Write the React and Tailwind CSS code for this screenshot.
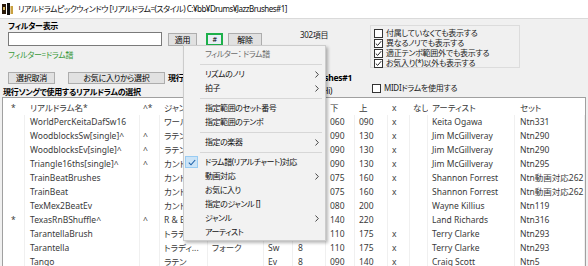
import React from "react";

const rows = [
  { s: "", name: "WorldPercKeitaDafSw16", c: "", g: "ワールド", lo: "060", hi: "090", x: "x", art: "Keita Ogawa", set: "Ntn331" },
  { s: "", name: "WoodblocksSw[single]^", c: "^", g: "ラテン", lo: "090", hi: "130", x: "x", art: "Jim McGillveray", set: "Ntn290" },
  { s: "", name: "WoodblocksEv[single]^", c: "^", g: "ラテン", lo: "090", hi: "130", x: "x", art: "Jim McGillveray", set: "Ntn290" },
  { s: "", name: "Triangle16ths[single]^", c: "^", g: "カントリー", lo: "090", hi: "130", x: "x", art: "Jim McGillveray", set: "Ntn295" },
  { s: "", name: "TrainBeatBrushes", c: "", g: "カントリー", lo: "075", hi: "160", x: "x", art: "Shannon Forrest", set: "Ntn動画対応262" },
  { s: "", name: "TrainBeat", c: "", g: "カントリー", lo: "075", hi: "160", x: "x", art: "Shannon Forrest", set: "Ntn動画対応262" },
  { s: "", name: "TexMex2BeatEv", c: "", g: "カントリー", lo: "080", hi: "200", x: "", art: "Wayne Killius", set: "Ntn119" },
  { s: "*", name: "TexasRnBShuffle^", c: "^", g: "R & B", lo: "140", hi: "220", x: "", art: "Land Richards", set: "Ntn316" },
  { s: "", name: "TarantellaBrush", c: "", g: "トラディ...", lo: "110", hi: "175", x: "x", art: "Terry Clarke", set: "Ntn293" },
  { s: "", name: "Tarantella", c: "", g: "トラディ...", g2: "フォーク", f: "Sw", b: "8", lo: "110", hi: "175", x: "x", art: "Terry Clarke", set: "Ntn293" },
  { s: "", name: "Tango", c: "", g: "ラテン", g2: "", f: "Ev", b: "8", lo: "090", hi: "140", x: "x", art: "Craig Scott", set: "Ntn5" },
];

const cols = [
  { k: "s", w: "w-[22px] pl-[8px]", h: "*" },
  { k: "name", w: "w-[115px] pl-[5px]", h: "リアルドラム名*" },
  { k: "c", w: "w-[20px] pl-[3px]", h: "^*" },
  { k: "g", w: "w-[48px] pl-[4px]", h: "ジャンル" },
  { k: "g2", w: "w-[56px] pl-[4px]", h: "" },
  { k: "f", w: "w-[29px] pl-[4px]", h: "" },
  { k: "b", w: "w-[33px] pl-[5px]", h: "" },
  { k: "lo", w: "w-[29px] pl-[4px]", h: "下" },
  { k: "hi", w: "w-[33px] pl-[4px]", h: "上" },
  { k: "x", w: "w-[22px] pl-[4px]", h: "x" },
  { k: "none", w: "w-[18px] pl-[3px]", h: "なし" },
  { k: "art", w: "w-[87px] pl-[4px]", h: "アーティスト" },
  { k: "set", w: "w-[70px] pl-[5px]", h: "セット" },
];

function Check({ on }) {
  return (
    <span className="flex h-[9px] w-[9px] shrink-0 items-center justify-center border border-[#333] bg-white">
      {on && (
        <svg width="7" height="7" viewBox="0 0 7 7">
          <path d="M0.8 3.6 L2.7 5.4 L6.2 1.2" fill="none" stroke="#222" strokeWidth="1" />
        </svg>
      )}
    </span>
  );
}

function Btn({ children, className = "" }) {
  return (
    <div className={`flex items-center justify-center border border-[#adadad] bg-[#e1e1e1] text-black ${className}`}>
      {children}
    </div>
  );
}

function Sep() {
  return (
    <div className="flex h-[6px] items-center pl-[16px] pr-[3px]">
      <div className="h-px w-full bg-[#d7d7d7]" />
    </div>
  );
}

function Item({ label, arrow, checked, disabled }) {
  return (
    <div className="relative flex h-[14px] items-center justify-between pl-[21px] pr-[6px]">
      {checked && (
        <span className="absolute left-[1px] top-[1px] flex h-[12px] w-[13px] items-center justify-center border border-[#99ccf3] bg-[#cce4f7]">
          <svg width="8" height="7" viewBox="0 0 8 7">
            <path d="M0.8 3.6 L3 5.8 L7.2 1" fill="none" stroke="#1c5fa8" strokeWidth="1.1" />
          </svg>
        </span>
      )}
      <span className={disabled ? "text-[#6d6d6d]" : "text-[#111]"}>{label}</span>
      {arrow && (
        <svg width="4" height="7" viewBox="0 0 4 7">
          <path d="M0.5 0.5 L3.3 3.5 L0.5 6.5" fill="none" stroke="#333" strokeWidth="0.9" />
        </svg>
      )}
    </div>
  );
}

export default function App() {
  return (
    <div className="relative h-[266px] w-[588px] overflow-hidden bg-[#f0f0f0] font-['Noto_Sans','Noto_Sans_CJK_JP',sans-serif] text-[8px] leading-[10px] tracking-[-0.3px] text-black [font-feature-settings:'palt']">
      {/* title bar */}
      <div className="flex h-[19px] items-center gap-[5px] border-b border-[#dadada] bg-white pl-[2px]">
        <svg width="11" height="12" viewBox="0 0 11 12">
          <rect x="0" y="1" width="4" height="10" fill="#2a1a0a" />
          <rect x="5" y="0" width="3" height="12" fill="#111" />
          <rect x="8.5" y="3" width="2.5" height="8" fill="#c8a040" />
          <rect x="1" y="4" width="2" height="3" fill="#d8b860" />
        </svg>
        <span className="text-[8px] tracking-[-0.5px] text-[#111]">リアルドラムピックウィンドウ [リアルドラム=(スタイル) C:¥bb¥Drums¥JazzBrushes#1]</span>
      </div>

      {/* filter row */}
      <div className="flex h-[51px]">
        <div className="w-[262px] pl-[8px] pt-[2px]">
          <div className="font-bold">フィルター表示</div>
          <div className="mt-[1px] flex h-[14px] items-start">
            <div className="h-[14px] w-[158px] border border-[#7a7a7a] bg-white" />
            <Btn className="ml-[6px] mt-[1px] h-[13px] w-[30px]">適用</Btn>
            <div className="ml-[9px] mt-[1px] flex h-[13px] w-[17px] items-center justify-center border-2 border-[#1db04a] bg-[#e8eef6] text-[7px]">#</div>
            <Btn className="ml-[5px] mt-[1px] h-[13px] w-[35px]">解除</Btn>
          </div>
          <div className="mt-[4px] text-[#3a9a3a]">フィルター=ドラム譜</div>
        </div>
        <div className="w-[108px] pl-[38px] pt-[11px] text-[#222]">302項目</div>
        <div className="mt-[6px] h-[43px] w-[150px] border border-[#dcdcdc] pl-[3px] pt-[2px] text-[#222]">
          {[
            ["付属していなくても表示する", false],
            ["異なるノリでも表示する", true],
            ["適正テンポ範囲外でも表示する", true],
            ["お気入り(*)以外も表示する", true],
          ].map(([t, on]) => (
            <div key={t} className="flex h-[10px] items-center gap-[3px]">
              <Check on={on} />
              <span>{t}</span>
            </div>
          ))}
        </div>
      </div>

      {/* selection row */}
      <div className="flex h-[27px]">
        <div className="w-[168px]">
          <div className="flex pl-[8px] pt-[2px] text-[#222]">
            <Btn className="h-[12px] w-[47px]">選択取消</Btn>
            <Btn className="ml-[13px] h-[12px] w-[97px]">お気に入りから選択</Btn>
          </div>
          <div className="mt-[3px] whitespace-nowrap pl-[3px] font-bold">現行ソングで使用するリアルドラムの選択</div>
        </div>
        <div className="w-[184px] pt-[1px] font-bold leading-[13px]">
          <div className="flex justify-between">
            <span>現行</span>
            <span className="text-[8.5px]">JazzBrushes#1</span>
          </div>
          <div className="flex justify-end pr-[20px] font-normal">(Swing Hi)</div>
        </div>
        <div className="pl-[20px] pt-[13px]">
          <div className="flex items-center gap-[3px] text-[#222]">
            <Check on={false} />
            <span>MIDIドラムを使用する</span>
          </div>
        </div>
      </div>

      {/* table */}
      <div className="mx-[2px] border border-[#a0a0a0] bg-white text-[8.5px] tracking-normal text-[#3a3a3a]">
        <div className="flex h-[17px] items-center pt-[3px]">
          {cols.map((c) => (
            <div key={c.k} className={`${c.w} shrink-0 overflow-hidden whitespace-nowrap`}>{c.h}</div>
          ))}
        </div>
        {rows.map((r) => (
          <div key={r.name} className="flex h-[14px] items-center">
            {cols.map((c) => (
              <div key={c.k} className={`${c.w} flex h-full shrink-0 items-center overflow-hidden whitespace-nowrap border-r border-[#f0f0f0]`}>
                {r[c.k] || ""}
              </div>
            ))}
          </div>
        ))}
      </div>

      {/* popup menu */}
      <div className="absolute left-[183px] top-[45px] w-[143px] border border-[#cccccc] bg-[#f2f2f2] py-px tracking-[-0.45px] shadow-[2px_2px_3px_rgba(0,0,0,0.28)]">
        <Item label="フィルター： ドラム譜" disabled />
        <Sep />
        <Item label="リズムのノリ" arrow />
        <Item label="拍子" arrow />
        <Sep />
        <Item label="指定範囲のセット番号" />
        <Item label="指定範囲のテンポ" />
        <Sep />
        <Item label="指定の楽器" arrow />
        <Sep />
        <Item label="ドラム譜(リアルチャート)対応" checked />
        <Item label="動画対応" arrow />
        <Item label="お気に入り" />
        <Item label="指定のジャンル []" />
        <Item label="ジャンル" arrow />
        <Item label="アーティスト" />
      </div>
    </div>
  );
}
